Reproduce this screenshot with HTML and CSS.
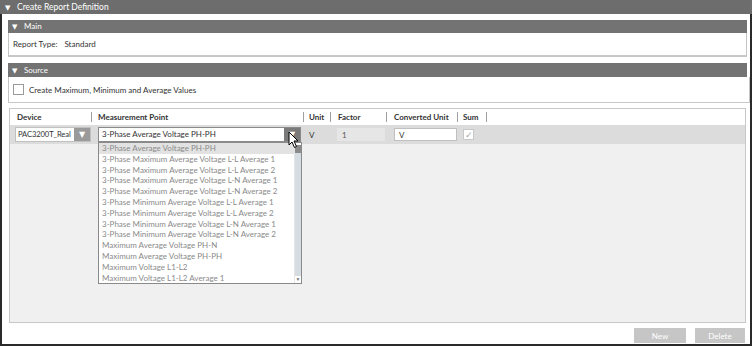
FILE: index.html
```html
<!DOCTYPE html>
<html lang="en">
<head>
    <meta charset="UTF-8">
    <title>Create Report Definition</title>
    <link rel="stylesheet" href="styles.css">
</head>
<body>
    <div class="titlebar"><span class="tri">&#9660;</span>Create Report Definition</div>
    <div class="frame">
        <div class="section-head"><span class="tri">&#9660;</span>Main</div>
        <div class="section-body main-body">
            <span class="label">Report Type:</span>
            <span>Standard</span>
        </div>

        <div class="section-head source-head"><span class="tri">&#9660;</span>Source</div>
        <div class="source-body">
            <div class="option">
                <span class="checkbox"></span>
                <span>Create Maximum, Minimum and Average Values</span>
            </div>
        </div>

        <div class="table-box">
            <div class="row head-row">
                <div class="cell c-device">Device<span class="sep"></span></div>
                <div class="cell c-point">Measurement Point<span class="sep"></span></div>
                <div class="cell c-unit">Unit<span class="sep"></span></div>
                <div class="cell c-factor">Factor<span class="sep"></span></div>
                <div class="cell c-conv">Converted Unit<span class="sep"></span></div>
                <div class="cell c-sum">Sum<span class="sep"></span></div>
            </div>
            <div class="row data-row">
                <div class="cell c-device">
                    <div class="select device-select">
                        <span class="select-text">PAC3200T_Real</span>
                        <span class="select-btn light">&#9660;</span>
                    </div>
                </div>
                <div class="cell c-point">
                    <div class="select point-select">
                        <span class="select-text">3-Phase Average Voltage PH-PH</span>
                        <span class="select-btn">&#9660;</span>
                    </div>
                    <svg class="cursor" width="12" height="18" viewBox="0 0 12 18">
                        <path d="M1 1 L1 14 L4 11 L6.5 16.5 L8.5 15.5 L6 10 L10 10 Z" fill="#fff" stroke="#000" stroke-width="1" stroke-linejoin="round"/>
                    </svg>
                    <div class="dropdown">
                        <ul class="items">
                            <li class="active">3-Phase Average Voltage PH-PH</li>
                            <li>3-Phase Maximum Average Voltage L-L Average 1</li>
                            <li>3-Phase Maximum Average Voltage L-L Average 2</li>
                            <li>3-Phase Maximum Average Voltage L-N Average 1</li>
                            <li>3-Phase Maximum Average Voltage L-N Average 2</li>
                            <li>3-Phase Minimum Average Voltage L-L Average 1</li>
                            <li>3-Phase Minimum Average Voltage L-L Average 2</li>
                            <li>3-Phase Minimum Average Voltage L-N Average 1</li>
                            <li>3-Phase Minimum Average Voltage L-N Average 2</li>
                            <li>Maximum Average Voltage PH-N</li>
                            <li>Maximum Average Voltage PH-PH</li>
                            <li>Maximum Voltage L1-L2</li>
                            <li>Maximum Voltage L1-L2 Average 1</li>
                        </ul>
                        <div class="scrollbar">
                            <span class="thumb"></span>
                            <span class="track"></span>
                            <span class="down">&#9660;</span>
                        </div>
                    </div>
                </div>
                <div class="cell c-unit">V</div>
                <div class="cell c-factor"><span class="input disabled">1</span></div>
                <div class="cell c-conv"><span class="input">V</span></div>
                <div class="cell c-sum"><span class="checkbox checked">&#10003;</span></div>
            </div>
            <div class="table-fill"></div>
        </div>

        <div class="buttons">
            <button class="btn">New</button>
            <button class="btn">Delete</button>
        </div>
    </div>
</body>
</html>
```

FILE: styles.css
```css
* {
    box-sizing: border-box;
}
body {
    margin: 0;
    width: 752px;
    height: 346px;
    overflow: hidden;
    font-family: "Lato", "Liberation Sans", sans-serif;
    font-size: 8px;
    color: #333;
    background: #fff;
}
.tri {
    font-family: "DejaVu Sans", sans-serif;
    font-size: 7px;
    display: inline-block;
    width: 12px;
}
.titlebar {
    height: 14px;
    background: #6d6d6d;
    color: #fff;
    font-size: 8.5px;
    line-height: 14px;
    padding-left: 5px;
}
.frame {
    height: 332px;
    border-left: 2px solid #2a2a2a;
    border-right: 2px solid #2a2a2a;
    border-bottom: 2px solid #2a2a2a;
    padding: 6px 3px 0 6px;
    display: flex;
    flex-direction: column;
}
.section-head {
    height: 13px;
    background: #737373;
    color: #fff;
    line-height: 13px;
    padding-left: 4px;
}
.source-head {
    margin-top: 6px;
    height: 14px;
    line-height: 14px;
}
.section-body {
    border: 1px solid #c4c4c4;
    border-top: none;
    border-bottom: 2px solid #c8c8c8;
}
.main-body {
    height: 24px;
    display: flex;
    align-items: center;
    padding-left: 4px;
}
.main-body .label {
    margin-right: 7px;
}
.source-body {
    border-left: 1px solid #c4c4c4;
    border-right: 1px solid #c4c4c4;
    border-bottom: 1px solid #c8c8c8;
    margin-right: -3px;
}
.option {
    height: 25px;
    display: flex;
    align-items: center;
    padding-left: 4px;
}
.checkbox {
    width: 11px;
    height: 11px;
    border: 1px solid #9a9a9a;
    background: #fff;
    margin-right: 5px;
    display: inline-flex;
    align-items: center;
    justify-content: center;
}
.checkbox.checked {
    border-color: #c8c8c8;
    color: #a8a8a8;
    font-size: 9px;
}
.table-box {
    margin: 5px 1px 0 1px;
    height: 215px;
    border: 1px solid #c8c8c8;
    display: flex;
    flex-direction: column;
}
.row {
    display: flex;
}
.head-row {
    height: 16px;
    background: #fff;
    font-weight: bold;
    color: #333;
}
.data-row {
    height: 19px;
    background: #dcdcdc;
}
.table-fill {
    flex: 1;
    background: #f0f0f0;
}
.cell {
    display: flex;
    align-items: center;
    position: relative;
}
.sep {
    width: 1px;
    height: 10px;
    background: #a0a0a0;
    margin-left: auto;
}
.c-device { width: 82px; padding-left: 7px; }
.c-point { width: 212px; padding-left: 6px; }
.c-unit { width: 27px; padding-left: 5px; }
.c-factor { width: 56px; padding-left: 7px; }
.c-conv { width: 71px; padding-left: 7px; }
.c-sum { width: 29px; padding-left: 5px; }
.data-row .c-device { padding-left: 5px; }
.data-row .c-factor { padding-left: 6px; }
.select {
    height: 15px;
    display: flex;
    background: #fff;
    border: 1px solid #a8a8a8;
}
.device-select {
    width: 76px;
    border-color: #c0c0c0;
}
.device-select .select-text {
    padding-left: 2px;
    font-size: 7.6px;
    letter-spacing: -0.1px;
}
.point-select {
    width: 203px;
    border-color: #8a8a8a;
}
.select-text {
    flex: 1;
    padding-left: 3px;
    line-height: 13px;
    white-space: nowrap;
    overflow: hidden;
}
.select-btn {
    width: 16px;
    background: #7a7a7a;
    color: #fff;
    font-family: "DejaVu Sans", sans-serif;
    font-size: 8px;
    display: flex;
    align-items: center;
    justify-content: center;
}
.select-btn.light {
    background: #9a9a9a;
}
.input {
    height: 13px;
    line-height: 13px;
    padding-left: 4px;
    background: #fff;
    border: 1px solid #c0c0c0;
    width: 63px;
}
.input.disabled {
    width: 48px;
    background: #e6e6e6;
    border-color: #e6e6e6;
    color: #555;
}
.cursor {
    position: absolute;
    left: 196px;
    top: 6px;
    z-index: 3;
}
.dropdown {
    position: absolute;
    left: 6px;
    top: 17px;
    width: 204px;
    height: 142px;
    background: #fff;
    border: 1px solid #8a8a8a;
    display: flex;
    z-index: 2;
    font-weight: normal;
}
.items {
    list-style: none;
    margin: 0;
    padding: 0;
    flex: 1;
}
.items li {
    height: 10.8px;
    line-height: 10.8px;
    padding-left: 3px;
    color: #8a8a8a;
    white-space: nowrap;
}
.items li.active {
    background: #e2e2e2;
}
.scrollbar {
    width: 7px;
    display: flex;
    flex-direction: column;
    background: #fff;
    border-left: 1px solid #e6e6e6;
}
.thumb {
    height: 8px;
    margin-top: 2px;
    background: #8a8a8a;
}
.track {
    flex: 1;
    background: #d6dde2;
}
.down {
    height: 7px;
    font-size: 5px;
    color: #777;
    text-align: center;
}
.buttons {
    display: flex;
    justify-content: flex-end;
    gap: 9px;
    margin-top: 5px;
    margin-right: 2px;
}
.btn {
    height: 15px;
    padding: 0;
    border: none;
    background: #c6c6c6;
    color: #fff;
    font-family: inherit;
    font-size: 8px;
}
.btn:first-child {
    width: 52px;
}
.btn:last-child {
    width: 50px;
}
```
